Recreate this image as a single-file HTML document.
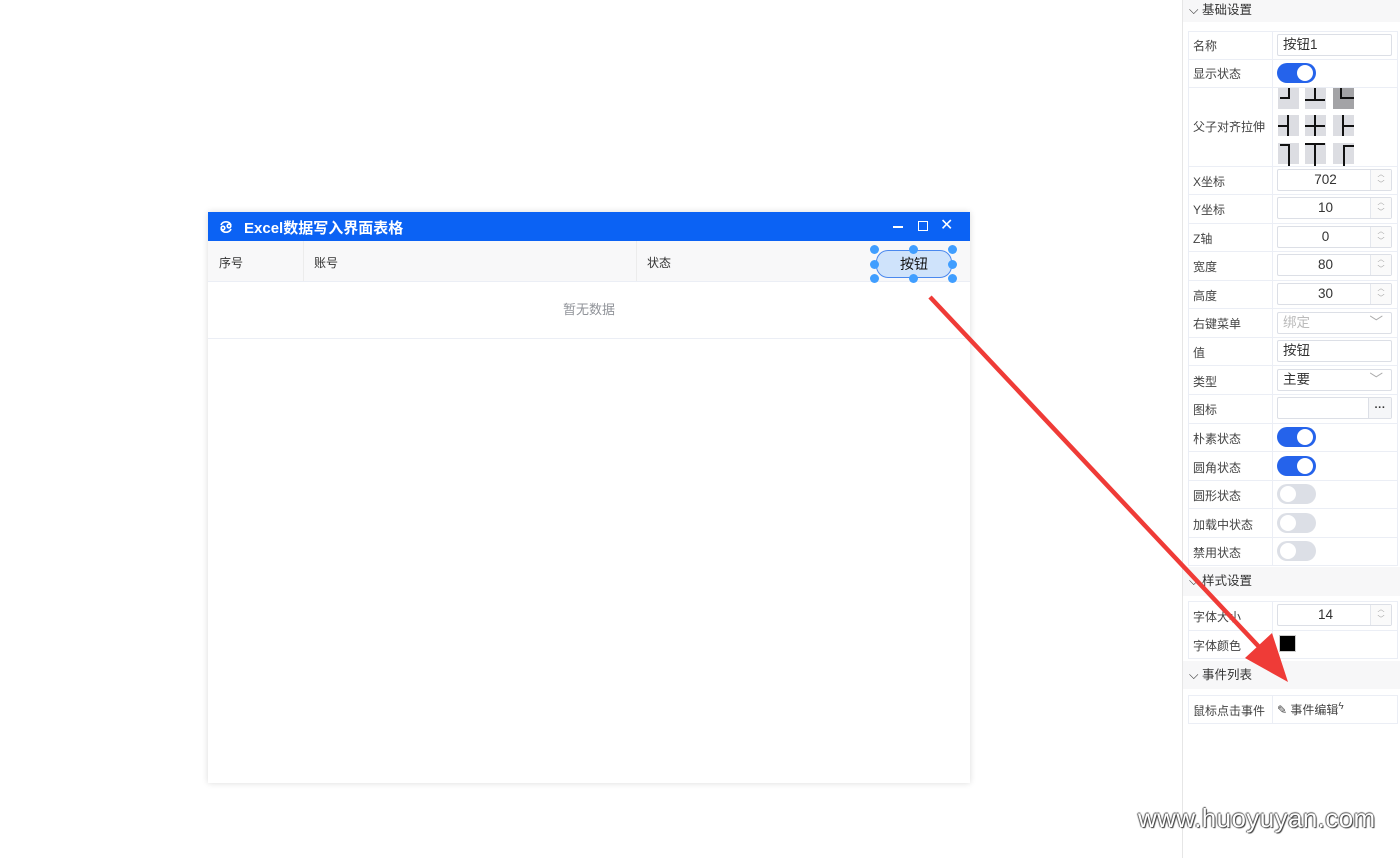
<!DOCTYPE html>
<html><head><meta charset="utf-8"><style>
*{margin:0;padding:0;box-sizing:border-box}
body{width:1400px;height:858px;background:#fff;position:relative;overflow:hidden;font-family:"Liberation Sans","Noto Sans CJK SC",sans-serif;font-size:12px;color:#333}
.a{position:absolute}
.win{left:208px;top:212px;width:762px;height:571px;background:#fff;box-shadow:0 0 6px rgba(0,0,0,.15)}
.tb{left:0;top:0;width:762px;height:29px;background:#0B62F4;color:#fff}
.hd{left:0;top:29px;width:762px;height:41px;background:#f8f8f9;border-bottom:1px solid #ebeef5}
.panel{left:1182px;top:0;width:218px;height:858px;border-left:1px solid #e6e6e6;background:#fff}
.sec{left:1183px;width:217px;height:28px;background:#f7f7f8;font-size:12.5px;color:#333;line-height:28px;padding-left:6px}
.lb{position:absolute;left:5px;font-size:12px;color:#444}
.inp{position:absolute;left:1277px;width:115px;height:22px;border:1px solid #dcdfe6;border-radius:2px;background:#fff;font-size:13.5px;line-height:20px}
.sw{position:absolute;left:1277px;width:39px;height:20px;border-radius:10px}
.sw i{position:absolute;top:2px;width:16px;height:16px;border-radius:50%;background:#fff}
.on{background:#2563eb}.on i{right:3px}
.off{background:#dcdfe6}.off i{left:3px}
.dot{position:absolute;width:9px;height:9px;border-radius:50%;background:#409eff}
.cell{position:absolute;width:21px;height:21px;background:#dcdde2}
.ln{position:absolute;left:1188px;width:210px;border-top:1px solid #ebeef5}
.sp{position:absolute;right:0;top:0;width:21px;height:20px;border-left:1px solid #e4e7ed;background:#fafafa;font-size:7px;color:#999;line-height:10px;text-align:center}
</style></head><body>
<div class="a win">
 <div class="a tb">
  <svg class="a" style="left:10px;top:7px" width="16" height="16" viewBox="0 0 16 16" fill="none" stroke="#fff" stroke-width="1.6"><path d="M3 6a5.5 5.5 0 0 1 10 0M13 10a5.5 5.5 0 0 1-10 0"/><circle cx="5" cy="9" r="1.8"/><circle cx="11" cy="7" r="1.8"/></svg>
  <div class="a" style="left:36px;top:5px;font-size:15px;font-weight:bold">Excel数据写入界面表格</div>
  <div class="a" style="left:685px;top:14px;width:10px;height:1.5px;background:#fff"></div>
  <div class="a" style="left:710px;top:9px;width:10px;height:10px;border:1.5px solid #fff"></div>
  <div class="a" style="left:732px;top:3px;font-size:16px">✕</div>
 </div>
 <div class="a hd">
  <div class="a" style="left:11px;top:13px">序号</div>
  <div class="a" style="left:95px;top:0;height:40px;border-left:1px solid #ececec"></div>
  <div class="a" style="left:106px;top:13px">账号</div>
  <div class="a" style="left:428px;top:0;height:40px;border-left:1px solid #ececec"></div>
  <div class="a" style="left:439px;top:13px">状态</div>
 </div>
 <div class="a" style="left:0;top:70px;width:762px;height:57px;border-bottom:1px solid #ebeef5;text-align:center;line-height:56px;color:#909399;font-size:13px">暂无数据</div>
 <div class="a" style="left:668px;top:38px;width:76px;height:28px;border:1px solid #4a88ee;border-radius:12px;background:#cfe3fb;text-align:center;line-height:26px;font-size:14px;color:#111">按钮</div>
 <div class="dot" style="left:662px;top:33px"></div><div class="dot" style="left:701px;top:33px"></div><div class="dot" style="left:740px;top:33px"></div>
 <div class="dot" style="left:662px;top:48px"></div><div class="dot" style="left:740px;top:48px"></div>
 <div class="dot" style="left:662px;top:62px"></div><div class="dot" style="left:701px;top:62px"></div><div class="dot" style="left:740px;top:62px"></div>
</div>

<div class="a panel"></div>
<div class="a sec" style="top:0;height:22px;line-height:20px">⌵ 基础设置</div>
<div class="a" style="left:1188px;top:31px;width:210px;height:535px;border:1px solid #ebeef5"></div>
<div class="a" style="left:1272px;top:31px;width:1px;height:535px;background:#ebeef5"></div>
<div class="ln" style="top:59px"></div><div class="ln" style="top:87px"></div><div class="ln" style="top:166px"></div>
<div class="ln" style="top:194px"></div><div class="ln" style="top:223px"></div><div class="ln" style="top:251px"></div>
<div class="ln" style="top:280px"></div><div class="ln" style="top:308px"></div><div class="ln" style="top:337px"></div>
<div class="ln" style="top:365px"></div><div class="ln" style="top:394px"></div><div class="ln" style="top:423px"></div>
<div class="ln" style="top:451px"></div><div class="ln" style="top:480px"></div><div class="ln" style="top:508px"></div>
<div class="ln" style="top:537px"></div>

<div class="a lb" style="left:1193px;top:37px">名称</div><div class="inp" style="top:34px;padding-left:5px">按钮1</div>
<div class="a lb" style="left:1193px;top:65px">显示状态</div><div class="sw on" style="top:63px"><i></i></div>
<div class="a lb" style="left:1193px;top:118px">父子对齐拉伸</div>
<div class="cell" style="left:1278px;top:88px"></div><div class="cell" style="left:1305px;top:88px"></div><div class="cell" style="left:1333px;top:88px;background:#a3a3a6"></div>
<div class="cell" style="left:1278px;top:115px"></div><div class="cell" style="left:1305px;top:115px"></div><div class="cell" style="left:1333px;top:115px"></div>
<div class="cell" style="left:1278px;top:143px"></div><div class="cell" style="left:1305px;top:143px"></div><div class="cell" style="left:1333px;top:143px"></div>
<svg class="a" style="left:1278px;top:88px" width="76" height="78" fill="none" stroke="#111" stroke-width="2"><path d="M2 10H11V0M27 12H47M37 0V12M63 0V10H76M0 38H10M10 27V48M27 38H47M37 27V48M65 27V48M65 38H76M2 57H11V78M27 56H47M37 56V78M76 58H66V78"/></svg>
<div class="a lb" style="left:1193px;top:173px">X坐标</div>
<div class="a lb" style="left:1193px;top:201px">Y坐标</div>
<div class="a lb" style="left:1193px;top:230px">Z轴</div>
<div class="a lb" style="left:1193px;top:258px">宽度</div>
<div class="a lb" style="left:1193px;top:287px">高度</div>
<div class="inp" style="top:169px;text-align:center;padding-right:18px">702<div class="sp">︿<br>﹀</div></div>
<div class="inp" style="top:197px;text-align:center;padding-right:18px">10<div class="sp">︿<br>﹀</div></div>
<div class="inp" style="top:226px;text-align:center;padding-right:18px">0<div class="sp">︿<br>﹀</div></div>
<div class="inp" style="top:254px;text-align:center;padding-right:18px">80<div class="sp">︿<br>﹀</div></div>
<div class="inp" style="top:283px;text-align:center;padding-right:18px">30<div class="sp">︿<br>﹀</div></div>
<div class="a lb" style="left:1193px;top:315px">右键菜单</div><div class="inp" style="top:312px;padding-left:5px;color:#bbb">绑定<span style="position:absolute;right:8px;color:#aaa">﹀</span></div>
<div class="a lb" style="left:1193px;top:344px">值</div><div class="inp" style="top:340px;padding-left:5px">按钮</div>
<div class="a lb" style="left:1193px;top:373px">类型</div><div class="inp" style="top:369px;padding-left:5px">主要<span style="position:absolute;right:8px;color:#aaa">﹀</span></div>
<div class="a lb" style="left:1193px;top:401px">图标</div><div class="inp" style="top:397px"><span style="position:absolute;right:0;top:0;width:23px;height:20px;background:#f5f6f8;border-left:1px solid #dcdfe6;text-align:center;font-weight:bold;font-size:11px">···</span></div>
<div class="a lb" style="left:1193px;top:430px">朴素状态</div><div class="sw on" style="top:427px"><i></i></div>
<div class="a lb" style="left:1193px;top:459px">圆角状态</div><div class="sw on" style="top:456px"><i></i></div>
<div class="a lb" style="left:1193px;top:487px">圆形状态</div><div class="sw off" style="top:484px"><i></i></div>
<div class="a lb" style="left:1193px;top:516px">加载中状态</div><div class="sw off" style="top:513px"><i></i></div>
<div class="a lb" style="left:1193px;top:544px">禁用状态</div><div class="sw off" style="top:541px"><i></i></div>

<div class="a sec" style="top:567px;height:29px">⌵ 样式设置</div>
<div class="a" style="left:1188px;top:601px;width:210px;height:58px;border:1px solid #ebeef5"></div>
<div class="a" style="left:1272px;top:601px;width:1px;height:58px;background:#ebeef5"></div>
<div class="ln" style="top:630px"></div>
<div class="a lb" style="left:1193px;top:608px">字体大小</div>
<div class="inp" style="top:604px;text-align:center;padding-right:18px">14<div class="sp">︿<br>﹀</div></div>
<div class="a lb" style="left:1193px;top:637px">字体颜色</div>
<div class="a" style="left:1279px;top:635px;width:17px;height:17px;background:#000;border:1px solid #ccc"></div>

<div class="a sec" style="top:661px;height:28px">⌵ 事件列表</div>
<div class="a" style="left:1188px;top:695px;width:210px;height:29px;border:1px solid #ebeef5"></div>
<div class="a" style="left:1272px;top:695px;width:1px;height:29px;background:#ebeef5"></div>
<div class="a lb" style="left:1193px;top:702px">鼠标点击事件</div>
<div class="a lb" style="left:1277px;top:701px">✎ 事件编辑<sup>ϟ</sup></div>

<svg class="a" style="left:0;top:0" width="1400" height="858"><line x1="930" y1="297" x2="1262" y2="650" stroke="#ef3b37" stroke-width="4.5"/><polygon points="1288,682 1245,658 1272,633" fill="#ef3b37"/></svg>
<div class="a" style="left:1138px;top:803px;font-size:26px;color:#fff;letter-spacing:0.4px;white-space:nowrap;text-shadow:1px 1px 1px #333,-1px 0 1px #555,0 -1px 1px #555">www.huoyuyan.com</div>
</body></html>
